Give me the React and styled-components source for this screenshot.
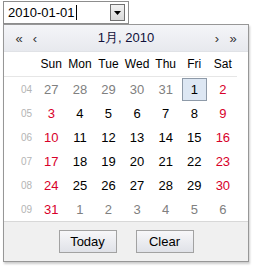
import React from 'react';
import styled, { createGlobalStyle } from 'styled-components';

const Global = createGlobalStyle`
body {
  margin:0;
  background:#fff;
  font-family:"Liberation Sans", Arial, sans-serif;
}
`;

const Page = styled.div`
padding:1px 0 0 3px;
width:257px;
height:268px;
box-sizing:border-box;
`;
const InputBox = styled.div`
width:126px;
height:23px;
box-sizing:border-box;
border:1px solid #8d8d8d;
display:flex;
align-items:center;
padding:0 3px 0 4px;
`;
const Value = styled.span`
font-size:13px;
color:#000;
display:flex;
align-items:center;
`;
const Caret = styled.span`
display:inline-block;
width:1px;
height:15px;
background:#000;
margin-left:1px;
`;
const DropButton = styled.div`
margin-left:auto;
width:15px;
height:17px;
box-sizing:border-box;
border:1px solid #707070;
background:linear-gradient(#f2f2f2, #d9d9d9);
display:flex;
align-items:center;
justify-content:center;
`;
const Popup = styled.div`
width:246px;
box-sizing:border-box;
border:1px solid #979797;
box-shadow:1px 2px 2px rgba(0,0,0,0.2);
background:#fff;
`;
const Header = styled.div`
height:26px;
display:flex;
align-items:center;
padding:0 8px;
background:linear-gradient(#f4f5f8, #e7e9ee);
border-bottom:1px solid #e0e2e6;
`;
const Nav = styled.span`
font-size:13px;
color:#333;
width:${p => p.$w || 14}px;
text-align:center;
`;
const Title = styled.div`
flex:1;
text-align:center;
font-size:13px;
color:#10103a;
`;
const Grid = styled.div`
display:grid;
grid-template-columns:33px repeat(7, 28.6px);
`;
const DayName = styled.div`
height:24px;
border-bottom:1px solid #e6e6e6;
display:flex;
align-items:center;
justify-content:center;
font-size:12px;
color:#000;
`;
const Week = styled.div`
height:24px;
display:flex;
align-items:center;
justify-content:flex-end;
padding-right:5px;
font-size:10px;
color:#b4b4b4;
`;
const Day = styled.div`
height:24px;
display:flex;
align-items:center;
justify-content:center;
font-size:13px;
color:${p => (p.$other ? '#808080' : p.$weekend ? '#d8002a' : '#000')};
`;
const Selected = styled.span`
width:25px;
height:23px;
box-sizing:border-box;
border:1px solid #8e9aa8;
background:#dde7f3;
display:flex;
align-items:center;
justify-content:center;
`;
const Footer = styled.div`
height:39px;
border-top:1px solid #d8d8d8;
background:#f0f0f0;
display:flex;
align-items:center;
justify-content:center;
gap:19px;
`;
const Button = styled.button`
width:58px;
height:23px;
border:1px solid #a2a2a2;
background:linear-gradient(#f7f7f9, #e0e2e8);
font-family:inherit;
font-size:13px;
color:#000;
padding:0;
`;

const names = ['Sun', 'Mon', 'Tue', 'Wed', 'Thu', 'Fri', 'Sat'];
const weeks = [
  ['04', [27, 28, 29, 30, 31, 1, 2]],
  ['05', [3, 4, 5, 6, 7, 8, 9]],
  ['06', [10, 11, 12, 13, 14, 15, 16]],
  ['07', [17, 18, 19, 20, 21, 22, 23]],
  ['08', [24, 25, 26, 27, 28, 29, 30]],
  ['09', [31, 1, 2, 3, 4, 5, 6]]
];

export default function App() {
  return (
    <Page>
      <Global />
      <InputBox>
        <Value>2010-01-01<Caret /></Value>
        <DropButton>
          <svg width="7" height="4" viewBox="0 0 7 4"><path d="M0 0h7L3.5 4z" fill="#000" /></svg>
        </DropButton>
      </InputBox>
      <Popup>
        <Header>
          <Nav>«</Nav>
          <Nav $w={18}>‹</Nav>
          <Title>1月, 2010</Title>
          <Nav $w={18}>›</Nav>
          <Nav>»</Nav>
        </Header>
        <Grid>
          <DayName />
          {names.map(n => <DayName key={n}>{n}</DayName>)}
          {weeks.map(([w, days], r) => (
            <React.Fragment key={w}>
              <Week>{w}</Week>
              {days.map((d, i) => {
                const other = (r === 0 && i < 5) || (r === 5 && i > 0);
                const sel = r === 0 && i === 5;
                return (
                  <Day key={i} $other={other} $weekend={i === 0 || i === 6}>
                    {sel ? <Selected>{d}</Selected> : d}
                  </Day>
                );
              })}
            </React.Fragment>
          ))}
        </Grid>
        <Footer>
          <Button>Today</Button>
          <Button>Clear</Button>
        </Footer>
      </Popup>
    </Page>
  );
}
